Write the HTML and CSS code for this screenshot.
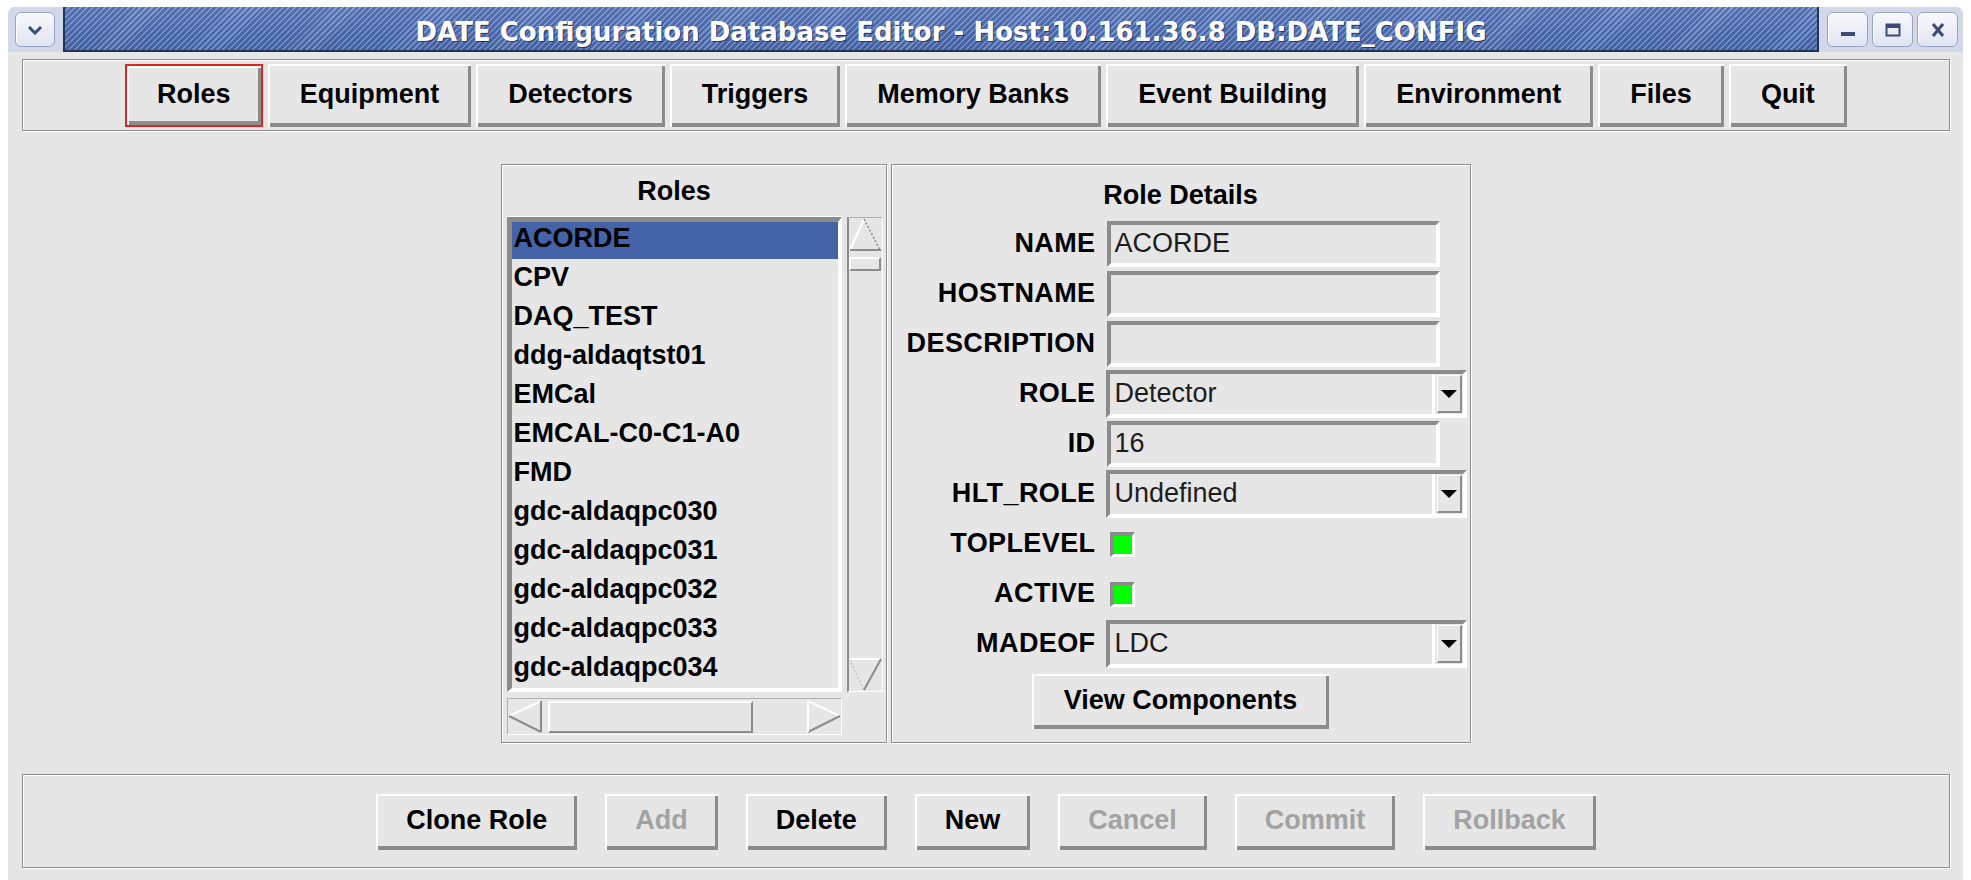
FILE: index.html
```html
<!DOCTYPE html>
<html lang="en">
<head>
<meta charset="utf-8">
<title>DATE Configuration Database Editor</title>
<link rel="stylesheet" href="styles.css">
</head>
<body>
<div class="window">
  <header class="titlebar">
    <div class="tb-side tb-left">
      <span class="wm-btn">
        <svg width="16" height="10" viewBox="0 0 16 10"><path d="M2 2 L8 8 L14 2" fill="none" stroke="#3a4a78" stroke-width="3"/></svg>
      </span>
    </div>
    <div class="tb-title">DATE Configuration Database Editor - Host:10.161.36.8 DB:DATE_CONFIG</div>
    <div class="tb-side tb-right">
      <span class="wm-btn">
        <svg width="16" height="14" viewBox="0 0 16 14"><rect x="1" y="9" width="14" height="4" fill="#3a4a78"/></svg>
      </span>
      <span class="wm-btn">
        <svg width="16" height="14" viewBox="0 0 16 14"><rect x="1.5" y="1.5" width="13" height="11" fill="none" stroke="#3a4a78" stroke-width="2"/><rect x="1" y="1" width="14" height="4" fill="#3a4a78"/></svg>
      </span>
      <span class="wm-btn">
        <svg width="16" height="14" viewBox="0 0 16 14"><path d="M3 1 L13 13 M13 1 L3 13" stroke="#3a4a78" stroke-width="3"/></svg>
      </span>
    </div>
  </header>

  <div class="client">
    <nav class="frame toolbar">
      <button class="btn tab focus">Roles</button>
      <button class="btn tab">Equipment</button>
      <button class="btn tab">Detectors</button>
      <button class="btn tab">Triggers</button>
      <button class="btn tab">Memory Banks</button>
      <button class="btn tab">Event Building</button>
      <button class="btn tab">Environment</button>
      <button class="btn tab">Files</button>
      <button class="btn tab">Quit</button>
    </nav>

    <main class="content">
      <section class="frame panel roles-panel">
        <h2 class="panel-title">Roles</h2>
        <div class="list-area">
          <ul class="listbox">
            <li class="item selected">ACORDE</li>
            <li class="item">CPV</li>
            <li class="item">DAQ_TEST</li>
            <li class="item">ddg-aldaqtst01</li>
            <li class="item">EMCal</li>
            <li class="item">EMCAL-C0-C1-A0</li>
            <li class="item">FMD</li>
            <li class="item">gdc-aldaqpc030</li>
            <li class="item">gdc-aldaqpc031</li>
            <li class="item">gdc-aldaqpc032</li>
            <li class="item">gdc-aldaqpc033</li>
            <li class="item">gdc-aldaqpc034</li>
          </ul>
          <div class="vscroll">
            <svg class="arrow" width="34" height="34" viewBox="0 0 34 34">
              <line x1="2" y1="32" x2="16" y2="1" stroke="#ffffff" stroke-width="2"/>
              <line x1="16" y1="1" x2="32" y2="32" stroke="#8c8c8c" stroke-width="1.5" stroke-dasharray="2 2"/>
              <line x1="2" y1="32" x2="33" y2="32" stroke="#8c8c8c" stroke-width="2"/>
            </svg>
            <div class="thumb vthumb"></div>
            <div class="spacer"></div>
            <svg class="arrow" width="34" height="33" viewBox="0 0 34 33">
              <line x1="1" y1="1" x2="33" y2="1" stroke="#ffffff" stroke-width="2"/>
              <line x1="1" y1="1" x2="16" y2="32" stroke="#c4c4c4" stroke-width="1.5" stroke-dasharray="2 2"/>
              <line x1="16" y1="32" x2="33" y2="1" stroke="#8c8c8c" stroke-width="2"/>
            </svg>
          </div>
          <div class="hscroll">
            <svg class="arrow" width="35" height="35" viewBox="0 0 35 35">
              <line x1="1" y1="17" x2="33" y2="2" stroke="#ffffff" stroke-width="2"/>
              <line x1="1" y1="17" x2="33" y2="33" stroke="#8c8c8c" stroke-width="2"/>
              <line x1="33" y1="2" x2="33" y2="33" stroke="#8c8c8c" stroke-width="2"/>
            </svg>
            <div class="thumb hthumb"></div>
            <div class="spacer"></div>
            <svg class="arrow" width="34" height="35" viewBox="0 0 34 35">
              <line x1="1" y1="2" x2="33" y2="17" stroke="#ffffff" stroke-width="2"/>
              <line x1="1" y1="33" x2="33" y2="17" stroke="#8c8c8c" stroke-width="2"/>
              <line x1="1" y1="2" x2="1" y2="33" stroke="#ffffff" stroke-width="2"/>
            </svg>
          </div>
        </div>
      </section>

      <section class="frame panel details-panel">
        <h2 class="panel-title details-title">Role Details</h2>
        <div class="form">
          <span class="lbl">NAME</span>
          <div class="field entry">ACORDE</div>

          <span class="lbl">HOSTNAME</span>
          <div class="field entry"></div>

          <span class="lbl">DESCRIPTION</span>
          <div class="field entry"></div>

          <span class="lbl">ROLE</span>
          <div class="field combo">
            <span class="combo-text">Detector</span>
            <span class="combo-arrow"><svg width="16" height="10" viewBox="0 0 16 10"><path d="M0 1 H16 L8 9 Z" fill="#000"/></svg></span>
          </div>

          <span class="lbl">ID</span>
          <div class="field entry">16</div>

          <span class="lbl">HLT_ROLE</span>
          <div class="field combo">
            <span class="combo-text">Undefined</span>
            <span class="combo-arrow"><svg width="16" height="10" viewBox="0 0 16 10"><path d="M0 1 H16 L8 9 Z" fill="#000"/></svg></span>
          </div>

          <span class="lbl">TOPLEVEL</span>
          <div class="check-cell"><span class="check on"></span></div>

          <span class="lbl">ACTIVE</span>
          <div class="check-cell"><span class="check on"></span></div>

          <span class="lbl">MADEOF</span>
          <div class="field combo">
            <span class="combo-text">LDC</span>
            <span class="combo-arrow"><svg width="16" height="10" viewBox="0 0 16 10"><path d="M0 1 H16 L8 9 Z" fill="#000"/></svg></span>
          </div>
        </div>
        <div class="form-actions">
          <button class="btn wide">View Components</button>
        </div>
      </section>
    </main>

    <footer class="frame actions">
      <button class="btn act">Clone Role</button>
      <button class="btn act" disabled>Add</button>
      <button class="btn act">Delete</button>
      <button class="btn act">New</button>
      <button class="btn act" disabled>Cancel</button>
      <button class="btn act" disabled>Commit</button>
      <button class="btn act" disabled>Rollback</button>
    </footer>
  </div>
</div>
</body>
</html>
```

FILE: styles.css
```css
* {
  box-sizing: border-box;
}

html,
body {
  margin: 0;
  background: #ffffff;
}

body {
  font-family: "Liberation Sans", Arial, sans-serif;
  font-size: 27px;
  font-weight: bold;
  color: #000;
}

/* ---- window frame ---- */
.window {
  margin: 7px 0 0 8px;
  width: 1955px;
  height: 873px;
  background: #e6e6e6;
  display: flex;
  flex-direction: column;
  border-radius: 7px 7px 0 0;
  overflow: hidden;
}

.titlebar {
  height: 45px;
  display: flex;
  flex: none;
  background: #d0d8ea;
}

.tb-side {
  display: flex;
  align-items: center;
  flex: none;
}

.tb-left {
  width: 55px;
  padding-left: 7px;
}

.tb-right {
  width: 144px;
  padding-left: 8px;
  gap: 4px;
}

.wm-btn {
  width: 41px;
  height: 35px;
  border: 1px solid #97a3c3;
  border-radius: 6px;
  background: linear-gradient(#f8f9fd, #dfe4f1);
  display: flex;
  align-items: center;
  justify-content: center;
  box-shadow: inset 1px 1px 0 #ffffff;
}

.tb-left .wm-btn {
  width: 40px;
}

.tb-title {
  flex: 1;
  display: flex;
  align-items: center;
  justify-content: center;
  padding: 6px 0 0 20px;
  border: 2px solid #22335a;
  border-top: 0;
  background:
    linear-gradient(rgba(255, 255, 255, 0.08), rgba(0, 0, 0, 0.06)),
    repeating-linear-gradient(135deg, #4765aa 0 2.6px, #7893cc 2.6px 4.2px);
  color: #ffffff;
  font-family: "DejaVu Sans", sans-serif;
  font-weight: bold;
  font-size: 26px;
  white-space: nowrap;
  text-shadow: 1px 1px 0 #26375f;
}

/* ---- client area ---- */
.client {
  flex: 1;
  display: flex;
  flex-direction: column;
}

.frame {
  border: 1px solid #8e8e8e;
  box-shadow: inset 1px 1px 0 #ffffff, 1px 1px 0 #ffffff;
}

.btn {
  appearance: none;
  margin: 0;
  border: 0;
  border-radius: 0;
  background: #e6e6e6;
  font: inherit;
  color: #000;
  white-space: nowrap;
  box-shadow: inset 2px 2px 0 #ffffff, inset -3px -4px 0 #8c8c8c;
  cursor: default;
}

.btn:disabled {
  color: #a2a2a2;
}

.toolbar {
  margin: 7px 13px 0 14px;
  height: 72px;
  padding-top: 4px;
  display: flex;
  justify-content: center;
  gap: 5px;
}

.tab {
  height: 63px;
  padding: 0 32px 3px;
}

.tab.focus {
  box-shadow: inset 0 0 0 2px #e42222, inset 4px 4px 0 #ffffff, inset -5px -6px 0 #8c8c8c;
}

.content {
  margin-top: 33px;
  display: flex;
  justify-content: center;
  gap: 4px;
}

.panel {
  height: 579px;
}

.panel-title {
  margin: 0;
  font-size: 27px;
  font-weight: bold;
  height: 52px;
  display: flex;
  align-items: center;
  justify-content: center;
}

/* ---- roles list ---- */
.roles-panel {
  width: 386px;
  padding: 0 3px 0 5px;
}

.roles-panel .panel-title {
  width: 335px;
}

.list-area {
  display: grid;
  grid-template-columns: 335px 36px;
  grid-template-rows: 475px 37px;
  column-gap: 5px;
  row-gap: 6px;
}

.listbox {
  list-style: none;
  margin: 0;
  padding: 0;
  overflow: hidden;
  border-style: solid;
  border-width: 5px 4px 4px 5px;
  border-color: #8a8a8a #ffffff #ffffff #8a8a8a;
  box-shadow: 0 -1px 0 #ffffff;
}

.item {
  height: 37px;
  margin-bottom: 2px;
  line-height: 32px;
  padding-left: 2px;
  white-space: nowrap;
}

.item.selected {
  background: #4463a9;
}

.vscroll {
  display: flex;
  flex-direction: column;
  align-items: center;
  border-style: solid;
  border-width: 1px 1px 1px 2px;
  border-color: #b0b0b0 #ffffff #ffffff #8c8c8c;
}

.hscroll {
  display: flex;
  align-items: center;
  border-style: solid;
  border-width: 1px;
  border-color: #b0b0b0 #ffffff #ffffff #b0b0b0;
}

.arrow {
  flex: none;
  display: block;
}

.spacer {
  flex: 1;
}

.thumb {
  background: #e6e6e6;
  border-style: solid;
  border-width: 2px;
  border-color: #ffffff #8c8c8c #8c8c8c #ffffff;
}

.vthumb {
  margin-top: 5px;
  width: 32px;
  height: 14px;
}

.hthumb {
  margin-left: 5px;
  width: 205px;
  height: 32px;
}

/* ---- role details form ---- */
.details-panel {
  width: 580px;
}

.details-title {
  height: 54px;
  padding-top: 6px;
}

.form {
  display: grid;
  grid-template-columns: 204px 1fr;
  grid-auto-rows: 50px;
  column-gap: 11px;
  align-items: center;
}

.lbl {
  text-align: right;
  padding-bottom: 2px;
  letter-spacing: 0.4px;
}

.field {
  height: 46px;
  border-style: solid;
  border-width: 4px;
  border-color: #8c8c8c #ffffff #ffffff #8c8c8c;
  font-weight: normal;
  color: #1c1c1c;
}

.entry {
  width: 333px;
  padding-left: 4px;
  line-height: 36px;
}

.combo {
  width: 361px;
  height: 48px;
  margin-left: -1px;
  display: flex;
  align-items: center;
  padding-right: 1px;
}

.combo-text {
  flex: 1;
  align-self: stretch;
  padding-left: 5px;
  line-height: 38px;
  border-right: 3px solid #ffffff;
}

.combo-arrow {
  width: 25px;
  height: 38px;
  margin-left: 2px;
  display: flex;
  align-items: center;
  justify-content: center;
  border-style: solid;
  border-width: 1px 2px 2px 1px;
  border-color: #ffffff #8c8c8c #8c8c8c #ffffff;
}

.check-cell {
  display: flex;
  align-items: center;
}

.check {
  width: 25px;
  height: 25px;
  margin-left: 3px;
  border-style: solid;
  border-width: 4px 3px 3px 4px;
  border-color: #8c8c8c #ffffff #ffffff #8c8c8c;
}

.check.on {
  background: #00ff00;
}

.form-actions {
  margin-top: 5px;
  display: flex;
  justify-content: center;
}

.wide {
  height: 55px;
  padding: 0 32px 3px;
}

/* ---- bottom action bar ---- */
.actions {
  margin: 31px 13px 0 14px;
  height: 94px;
  padding-top: 19px;
  display: flex;
  justify-content: center;
  align-items: flex-start;
  gap: 28px;
}

.act {
  height: 56px;
  padding: 0 30px 3px;
}
```
